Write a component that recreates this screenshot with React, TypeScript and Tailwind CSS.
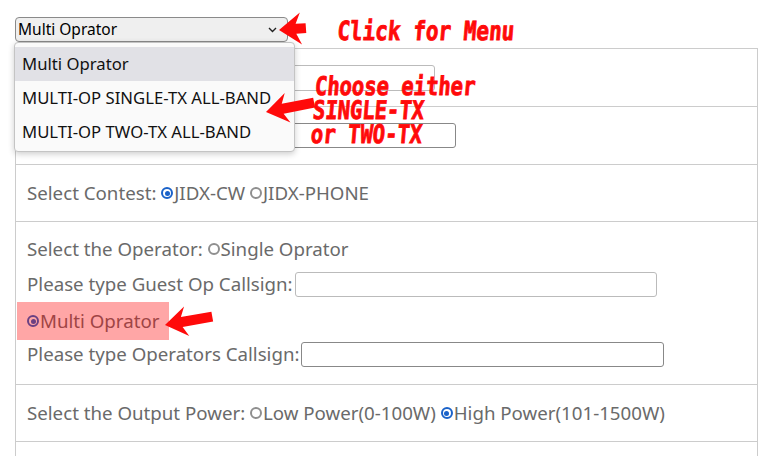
import React from "react";

function Radio({ checked }: { checked?: boolean }) {
  return checked ? (
    <span className="inline-flex items-center justify-center w-[12px] h-[12px] rounded-full border-[2px] border-[#1a62c9] mr-[1px]">
      <span className="w-[5px] h-[5px] rounded-full bg-[#1a62c9]" />
    </span>
  ) : (
    <span className="inline-block w-[12px] h-[12px] rounded-full border-[2px] border-[#8f8f8f] mr-[1px]" />
  );
}

function Arrow({ x, y, len, rot, head = 16 }: { x: number; y: number; len: number; rot: number; head?: number }) {
  const pts = `0,0 22,${-head} 17,-5 ${len},-5 ${len},5 17,5 22,${head}`;
  return <polygon points={pts} fill="#ff0a0a" transform={`translate(${x} ${y}) rotate(${rot})`} />;
}

export default function App() {
  return (
    <div className="relative w-[765px] h-[456px] overflow-hidden bg-white font-['Noto_Sans',sans-serif] text-[18.7px] text-[#6a6a6a]">
      {/* select box */}
      <div className="pt-[17px] pl-[15px]">
        <div className="flex items-center justify-between w-[273px] h-[25px] rounded-[4px] border border-[#8a8a8a] bg-[#efefef] pl-[2px] pr-[10px] text-[15.5px] text-black">
          <span>Multi Oprator</span>
          <svg width="9" height="6" viewBox="0 0 9 6">
            <path d="M1 1 L4.5 4.5 L8 1" fill="none" stroke="#222" strokeWidth="1.4" />
          </svg>
        </div>
      </div>

      {/* form table */}
      <div className="mt-[6px] ml-[15px] w-[743px] border-x border-t border-[#ccc]">
        <div className="flex items-center h-[58px] border-b border-[#ccc] pl-[11px]">
          <span className="w-[160px]" />
          <span className="ml-[3px] w-[245px] h-[26px] rounded-[3px] border border-[#bbb]" />
        </div>
        <div className="flex items-center h-[58px] border-b border-[#ccc] pl-[11px]">
          <span className="w-[180px]" />
          <span className="ml-[3px] w-[246px] h-[25px] rounded-[3px] border border-[#888]" />
        </div>
        <div className="flex items-center h-[57px] border-b border-[#ccc] pl-[11px]">
          <span>Select Contest:&nbsp;</span>
          <Radio checked />
          <span>JIDX-CW&nbsp;</span>
          <Radio />
          <span>JIDX-PHONE</span>
        </div>
        <div className="flex flex-col h-[163px] border-b border-[#ccc] pl-[11px] pt-[14px]">
          <div className="flex items-center h-[26px]">
            <span>Select the Operator:&nbsp;</span>
            <Radio />
            <span>Single Oprator</span>
          </div>
          <div className="flex items-center h-[26px] mt-[9px]">
            <span>Please type Guest Op Callsign:</span>
            <span className="ml-[2px] w-[362px] h-[25px] rounded-[3px] border border-[#bbb]" />
          </div>
          <div className="relative flex items-center h-[38px] mt-[5px] -ml-[10px] pl-[10px] w-[152px]">
            <Radio checked />
            <span>Multi Oprator</span>
            <span className="absolute inset-0 bg-[#ff0000]/35" />
          </div>
          <div className="flex items-center h-[24px] mt-[2px]">
            <span>Please type Operators Callsign:</span>
            <span className="ml-[2px] w-[363px] h-[25px] rounded-[3px] border border-[#888]" />
          </div>
        </div>
        <div className="flex items-center h-[57px] border-b border-[#ccc] pl-[11px]">
          <span>Select the Output Power:&nbsp;</span>
          <Radio />
          <span>Low Power(0-100W)&nbsp;</span>
          <Radio checked />
          <span>High Power(101-1500W)</span>
        </div>
        <div className="h-[40px]" />
      </div>

      {/* open dropdown menu */}
      <div className="absolute left-[14px] top-[42px] w-[281px] h-[110px] rounded-[4px] border border-[#c4c4c4] bg-[#fafafa] shadow-[0_2px_6px_rgba(0,0,0,0.2)] pt-[4px] text-[16.7px] text-[#111]">
        <div className="flex items-center h-[34px] pl-[7px] bg-[#e1e1e6]">Multi Oprator</div>
        <div className="flex items-center h-[34px] pl-[7px]">MULTI-OP SINGLE-TX ALL-BAND</div>
        <div className="flex items-center h-[34px] pl-[7px]">MULTI-OP TWO-TX ALL-BAND</div>
      </div>

      {/* annotations */}
      <div className="absolute left-[339px] top-[12px] font-['DejaVu_Sans_Mono',monospace] font-bold text-[21px] text-[#ff0a0a] [-webkit-text-stroke:0.7px_#ff0a0a] leading-[30px] scale-y-125 origin-top -skew-x-6 whitespace-pre">
        Click for Menu
      </div>
      <div className="absolute left-[316px] top-[75px] font-['DejaVu_Sans_Mono',monospace] font-bold text-[20.5px] text-[#ff0a0a] [-webkit-text-stroke:0.7px_#ff0a0a] leading-[19px] scale-y-125 origin-top -skew-x-6 whitespace-pre">
        {"Choose either\nSINGLE-TX\nor TWO-TX"}
      </div>
      <svg className="absolute inset-0 pointer-events-none" width="765" height="456" viewBox="0 0 765 456">
        <Arrow x={279} y={30} len={27} rot={-4} head={16} />
        <Arrow x={266} y={112} len={49} rot={-11} head={15} />
        <Arrow x={165} y={325} len={48} rot={-10} head={15} />
      </svg>
    </div>
  );
}
